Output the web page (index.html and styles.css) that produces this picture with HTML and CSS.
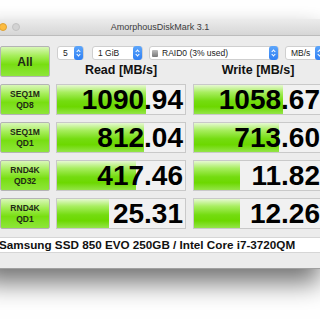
FILE: index.html
```html
<!DOCTYPE html>
<html lang="en">
<head>
  <meta charset="UTF-8">
  <title>AmorphousDiskMark 3.1</title>
  <link rel="stylesheet" href="styles.css">
</head>
<body>
  <div class="window">
    <div class="titlebar">
      <span class="light red"></span>
      <span class="light yellow"></span>
      <span class="light grey"></span>
      <span class="title">AmorphousDiskMark 3.1</span>
    </div>

    <div class="content">
      <div class="top">
        <button class="btn all">All</button>
        <div class="top-right">
          <div class="selects">
            <div class="select s-count">5<span class="step"></span></div>
            <div class="select s-size">1 GiB<span class="step"></span></div>
            <div class="select s-drive"><span class="disk"></span>RAID0 (3% used)<span class="step"></span></div>
            <div class="select s-unit">MB/s<span class="step"></span></div>
          </div>
          <div class="heads">
            <div>Read [MB/s]</div>
            <div>Write [MB/s]</div>
          </div>
        </div>
      </div>

      <div class="row">
        <button class="btn label">SEQ1M<br>QD8</button>
        <div class="val"><div class="bar" style="width: 89px"></div><span>1090.94</span></div>
        <div class="val"><div class="bar" style="width: 89px"></div><span>1058.67</span></div>
      </div>
      <div class="row">
        <button class="btn label">SEQ1M<br>QD1</button>
        <div class="val"><div class="bar" style="width: 87px"></div><span>812.04</span></div>
        <div class="val"><div class="bar" style="width: 85px"></div><span>713.60</span></div>
      </div>
      <div class="row">
        <button class="btn label">RND4K<br>QD32</button>
        <div class="val"><div class="bar" style="width: 79px"></div><span>417.46</span></div>
        <div class="val"><div class="bar" style="width: 46px"></div><span>11.82</span></div>
      </div>
      <div class="row">
        <button class="btn label">RND4K<br>QD1</button>
        <div class="val"><div class="bar" style="width: 52px"></div><span>25.31</span></div>
        <div class="val"><div class="bar" style="width: 46px"></div><span>12.26</span></div>
      </div>

      <div class="comment">Samsung SSD 850 EVO 250GB / Intel Core i7-3720QM</div>
    </div>
  </div>
</body>
</html>
```

FILE: styles.css
```css
html, body { margin: 0; height: 100%; }
body { background: #fff; overflow: hidden; font-family: "Liberation Sans", Arial, sans-serif; }

.window { margin: 19px 0 0 -20px; width: 340px; overflow: hidden; background: #ececec; border-bottom: 1px solid #a0a0a0; box-shadow: 0 14px 24px rgba(0, 0, 0, 0.55); }

.titlebar { height: 16px; display: flex; align-items: center; padding-left: 6px; gap: 5px; background: linear-gradient(#ececec, #d6d6d6); border-bottom: 1px solid #bcbcbc; position: relative; }
.light { width: 8px; height: 8px; border-radius: 50%; box-sizing: border-box; }
.light.red { background: #fc605c; border: 1px solid #de4a45; }
.light.yellow { background: #fdbc40; border: 1px solid #dea236; }
.light.grey { background: #d3d3d3; border: 1px solid #c2c2c2; }
.title { position: absolute; left: 20px; right: 0; text-align: center; font-size: 9px; color: #3c3c3c; }

.content { padding: 10px 0 15px 20px; }

.btn { flex-shrink: 0; font-family: inherit; font-weight: bold; color: #1f2a16; border: 1px solid #b4b4b4; border-radius: 2px; padding: 0; width: 50px; background: linear-gradient(#d9f7b8 0%, #a6ee5a 30%, #78de12 60%, #8ee63a 100%); }

.top { display: flex; gap: 6px; height: 31px; margin-bottom: 7px; }
.all { font-size: 12px; height: 31px; }
.top-right { display: flex; flex-direction: column; }

.selects { display: flex; height: 14px; margin-left: 1px; }
.select { position: relative; flex-shrink: 0; height: 14px; box-sizing: border-box; background: #fff; border: 1px solid #cfcfcf; border-radius: 3px; font-size: 8.5px; line-height: 12px; padding-left: 5px; color: #222; display: flex; align-items: center; }
.s-count { width: 27px; }
.s-size { width: 51px; margin-left: 8px; }
.s-drive { width: 130px; margin-left: 6px; padding-left: 2px; }
.s-unit { width: 40px; margin-left: 6px; }
.step { position: absolute; right: 0; top: -1px; width: 9px; height: 14px; border-radius: 3px; background: linear-gradient(#5da6fb, #2f7ff3); }
.step::before, .step::after { content: ""; position: absolute; left: 3px; width: 2px; height: 2px; border: solid #fff; border-width: 1px 0 0 1px; }
.step::before { top: 4px; transform: rotate(45deg); }
.step::after { top: 7px; transform: rotate(225deg); }
.disk { width: 6px; height: 7px; margin-right: 4px; background: linear-gradient(#bdbdbd, #777); border-radius: 1px; }

.heads { display: grid; grid-template-columns: 130px 130px; column-gap: 7px; margin-top: 3px; font-size: 12.5px; font-weight: bold; text-align: center; color: #111; line-height: 14px; }

.row { display: flex; gap: 6px; height: 31px; margin-bottom: 7px; }
.label { font-size: 8.5px; line-height: 11px; height: 31px; }
.val { position: relative; flex-shrink: 0; width: 130px; box-sizing: border-box; border: 1px solid #c9c9c9; background: #f1f1f1; display: flex; justify-content: flex-end; align-items: center; }
.val + .val { margin-left: 1px; }
.bar { position: absolute; left: 0; top: 0; bottom: 0; background: linear-gradient(#e6f9d2 0%, #a8ee60 25%, #74dc10 55%, #6cd800 75%, #94e548 100%); }
.val span { position: relative; font-size: 28px; font-weight: bold; color: #000; padding-right: 2px; }

.comment { margin: 8px 0 0 -20px; padding-left: 19px; height: 14px; background: #fff; border: 1px solid #d6d6d6; border-width: 1px 0; font-size: 11.7px; font-weight: bold; line-height: 14px; color: #111; }
```
